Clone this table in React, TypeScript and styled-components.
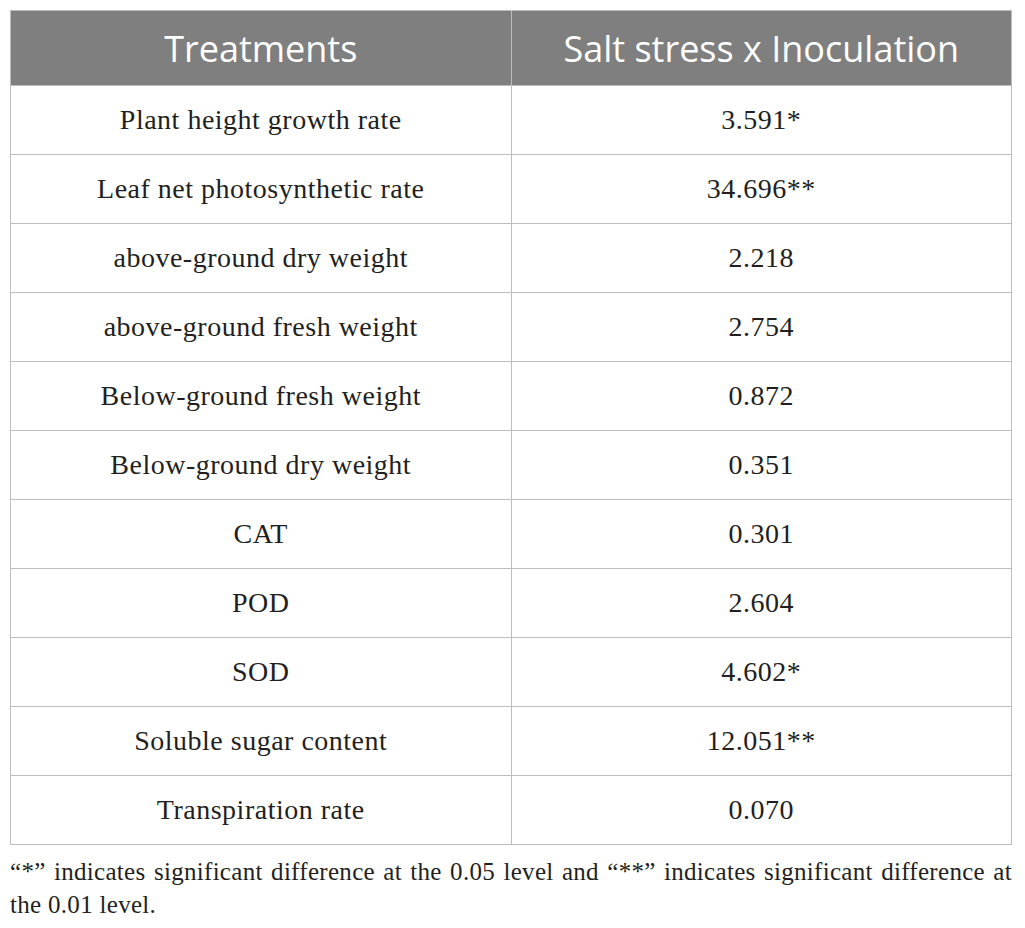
import styled, { createGlobalStyle } from "styled-components";

const rows: [string, string][] = [
  ["Plant height growth rate", "3.591*"],
  ["Leaf net photosynthetic rate", "34.696**"],
  ["above-ground dry weight", "2.218"],
  ["above-ground fresh weight", "2.754"],
  ["Below-ground fresh weight", "0.872"],
  ["Below-ground dry weight", "0.351"],
  ["CAT", "0.301"],
  ["POD", "2.604"],
  ["SOD", "4.602*"],
  ["Soluble sugar content", "12.051**"],
  ["Transpiration rate", "0.070"],
];

const GlobalStyle = createGlobalStyle`
  body {
    margin: 0;
    background: #fff;
  }
`;

export default function App() {
  return (
    <Page>
      <GlobalStyle />
      <Table>
        <thead>
          <tr>
            <HeadCell>Treatments</HeadCell>
            <HeadCell>Salt stress x Inoculation</HeadCell>
          </tr>
        </thead>
        <tbody>
          {rows.map(([name, value]) => (
            <tr key={name}>
              <Cell>{name}</Cell>
              <Cell>{value}</Cell>
            </tr>
          ))}
        </tbody>
      </Table>
      <Note>
        “*” indicates significant difference at the 0.05 level and “**”
        indicates significant difference at the 0.01 level.
      </Note>
    </Page>
  );
}

const Page = styled.div`
  padding: 10px 12px 10px 10px;
  width: 1024px;
  box-sizing: border-box;
`;

const Table = styled.table`
  width: 1002px;
  border-collapse: collapse;
  table-layout: fixed;
  border: 1.5px solid #bdbdbd;
`;

const HeadCell = styled.th`
  width: 50%;
  height: 74px;
  padding: 0;
  background: #7f7f7f;
  color: #fff;
  font-family: "Open Sans", sans-serif;
  font-weight: 400;
  font-size: 36px;
  text-align: center;
  border-left: 1.5px solid #bdbdbd;
`;

const Cell = styled.td`
  height: 68px;
  padding: 0;
  color: #231f20;
  font-family: "Liberation Serif", serif;
  font-size: 28px;
  letter-spacing: 0.5px;
  text-align: center;
  border: 1.5px solid #bdbdbd;
`;

const Note = styled.p`
  width: 1002px;
  margin: 10px 0 0;
  font-family: "Liberation Serif", serif;
  font-size: 25px;
  letter-spacing: 0.3px;
  line-height: 33px;
  color: #231f20;
  text-align: justify;
`;
